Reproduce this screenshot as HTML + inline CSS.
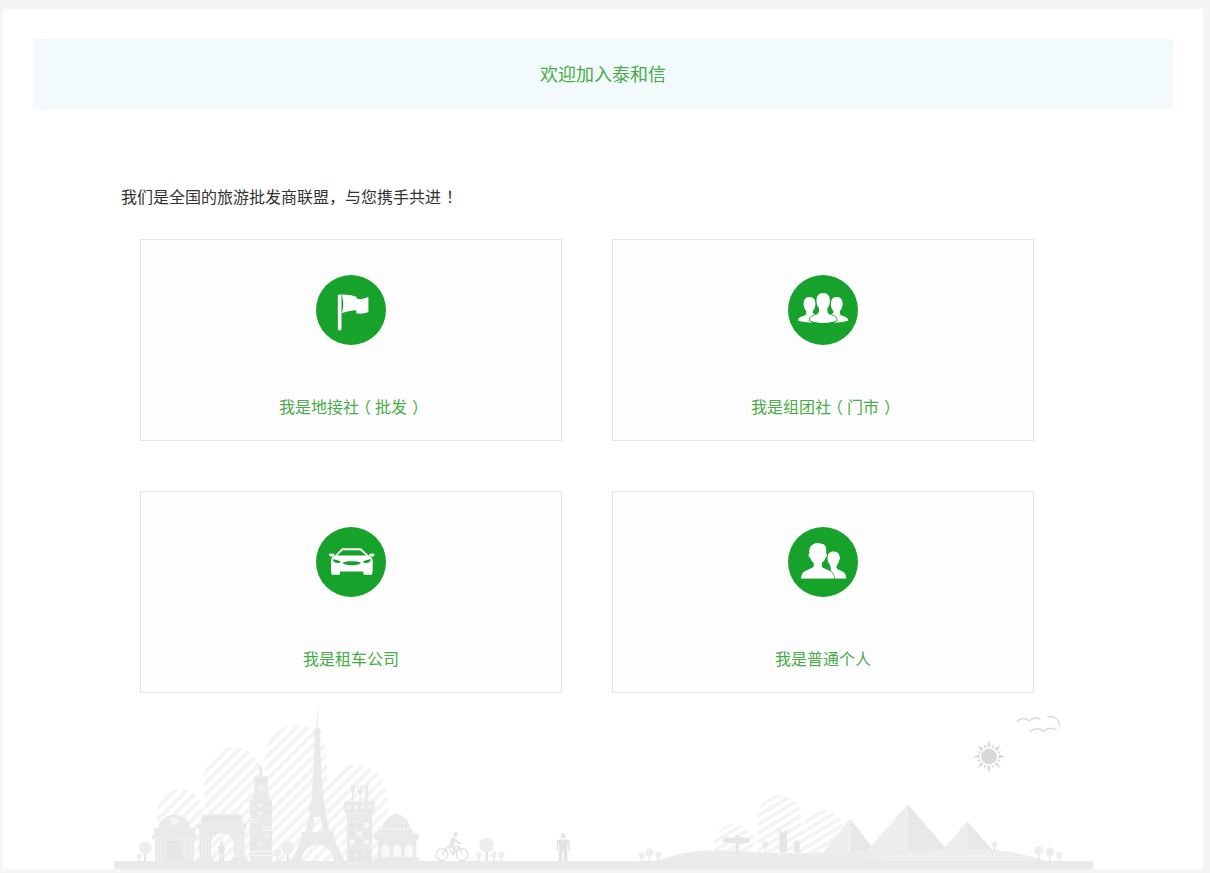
<!DOCTYPE html>
<html lang="zh-CN">
<head>
<meta charset="utf-8">
<title>欢迎加入泰和信</title>
<style>
*{box-sizing:border-box;margin:0;padding:0}
i{font-style:normal}
html,body{width:1210px;height:873px;overflow:hidden;background:#f5f5f5}
body{font-family:"Liberation Sans","Noto Sans CJK SC",sans-serif;position:relative;color:#333}
.panel{position:absolute;left:3px;top:9px;width:1200px;height:860px;background:#fff;overflow:hidden}
.banner{position:absolute;left:30px;top:30px;width:1140px;height:70px;background:#f2fafc;text-align:center;line-height:70px;font-size:18px;color:#4aab4a}
.banner span{position:relative;top:1px;font-weight:400}
.slogan{position:absolute;left:118px;top:177px;height:24px;line-height:24px;font-size:16px;color:#333;white-space:nowrap}
.card{position:absolute;width:422px;height:202px;border:1px solid #e5e5e5;background:#fdfdfd;text-decoration:none;display:block}
.card .ico{position:absolute;left:175px;top:35px;width:70px;height:70px;border-radius:50%;background:#16a22b}
.card .ico svg{position:absolute;left:0;top:0;width:70px;height:70px}
.card .txt{position:absolute;left:0;right:0;top:156px;height:24px;line-height:24px;text-align:center;font-size:16px;color:#4aab4a;white-space:nowrap}
.pl{position:relative;left:-4px}.pr{position:relative;left:5px}
.c1{left:137px;top:230px}
.c2{left:609px;top:230px}
.c3{left:137px;top:482px}
.c4{left:609px;top:482px}
.city{position:absolute;left:0;top:0;width:1200px;height:860px;pointer-events:none}
</style>
</head>
<body>
<div class="panel">
  <svg class="city" viewBox="3 9 1200 860">
    <!--CITY-->
<defs>
<pattern id="st1" width="8.2" height="8.2" patternUnits="userSpaceOnUse" patternTransform="rotate(45)"><rect x="0" y="0" width="4.2" height="8.2" fill="#f4f4f4"/></pattern>
<pattern id="st2" width="7.4" height="7.4" patternUnits="userSpaceOnUse" patternTransform="rotate(59)"><rect x="0" y="0" width="3.7" height="7.4" fill="#f4f4f4"/></pattern>
</defs>
<path d="M157 812 A23 23 0 0 1 203 812 V861 H157 Z" fill="url(#st1)"/>
<path d="M204 776 A29 29 0 0 1 262 776 V861 H204 Z" fill="url(#st1)"/>
<path d="M265 756 A31 31 0 0 1 327 756 V861 H265 Z" fill="url(#st1)"/>
<path d="M324.5 796 A31.5 31.5 0 0 1 387.5 796 V861 H324.5 Z" fill="url(#st1)"/>
<circle cx="734.5" cy="844.5" r="20.5" fill="url(#st2)"/>
<circle cx="779.5" cy="817" r="22" fill="url(#st2)"/>
<circle cx="823" cy="831" r="21" fill="url(#st2)"/>
<path d="M757.5 817 L757.5 861 L844 861 L844 831 L801.5 831 L801.5 817 Z" fill="url(#st2)"/>
<path d="M822.6 853 L850.2 818.7 L850.2 856 Z" fill="#eeeeee"/>
<path d="M850.2 818.7 L876 852 L850.2 856 Z" fill="#e8e8e8"/>
<path d="M866 852 L907.6 804.2 L907.6 858 Z" fill="#eeeeee"/>
<path d="M907.6 804.2 L946 848.5 L907.6 858 Z" fill="#e8e8e8"/>
<path d="M944 848.5 L967.1 821.3 L967.1 856 Z" fill="#eeeeee"/>
<path d="M967.1 821.3 L992.5 850 L967.1 856 Z" fill="#e8e8e8"/>
<path d="M655 861.5 C672 855 690 850.5 712 850.5 C740 850.5 760 853 790 853 C830 853 850 851 880 851 C930 851 960 846.5 992 849.5 C1015 852 1035 857 1047 861.5 Z" fill="#ececec"/>
<path d="M860 861.5 C900 852 960 848 1000 851 C1020 853 1038 858 1047 861.5 Z" fill="#eeeeee"/>
<rect x="114" y="861" width="979" height="8" fill="#eaeaea"/>
<rect x="144.5" y="848.0" width="1.6" height="13.0" fill="#dddddd"/>
<circle cx="145.3" cy="848" r="6.2" fill="#eeeeee"/>
<rect x="138.8" y="856.0" width="1.0" height="5.0" fill="#dddddd"/>
<circle cx="139.3" cy="856" r="2.6" fill="#eeeeee"/>
<rect x="287.0" y="847.7" width="1.6" height="13.3" fill="#dddddd"/>
<circle cx="287.8" cy="847.7" r="6.5" fill="#eeeeee"/>
<rect x="276.8" y="852.7" width="1.0" height="8.3" fill="#dddddd"/>
<circle cx="277.3" cy="852.7" r="3.8" fill="#eeeeee"/>
<rect x="485.7" y="845.0" width="1.9" height="16.0" fill="#dddddd"/>
<circle cx="486.6" cy="845" r="7.4" fill="#eeeeee"/>
<rect x="478.2" y="854.5" width="1.0" height="6.5" fill="#dddddd"/>
<circle cx="478.7" cy="854.5" r="3" fill="#eeeeee"/>
<rect x="493.3" y="854.5" width="1.0" height="6.5" fill="#dddddd"/>
<circle cx="493.8" cy="854.5" r="3" fill="#eeeeee"/>
<rect x="501.0" y="854.5" width="1.0" height="6.5" fill="#dddddd"/>
<circle cx="501.5" cy="854.5" r="3" fill="#eeeeee"/>
<rect x="641.1" y="855.4" width="1.0" height="5.6" fill="#dddddd"/>
<circle cx="641.6" cy="855.4" r="3" fill="#eeeeee"/>
<rect x="648.8" y="852.4" width="1.0" height="8.6" fill="#dddddd"/>
<circle cx="649.3" cy="852.4" r="4" fill="#eeeeee"/>
<rect x="657.7" y="854.4" width="1.0" height="6.6" fill="#dddddd"/>
<circle cx="658.2" cy="854.4" r="3" fill="#eeeeee"/>
<rect x="1038.3" y="850.4" width="1.1" height="10.6" fill="#dddddd"/>
<circle cx="1038.9" cy="850.4" r="4.5" fill="#eeeeee"/>
<rect x="1049.2" y="851.8" width="1.1" height="9.2" fill="#dddddd"/>
<circle cx="1049.8" cy="851.8" r="4.5" fill="#eeeeee"/>
<rect x="1058.8" y="854.8" width="1.0" height="6.2" fill="#dddddd"/>
<circle cx="1059.3" cy="854.8" r="3.2" fill="#eeeeee"/>
<rect x="764.5" y="844.5" width="1" height="6.5" fill="#e2e2e2"/>
<circle cx="765" cy="844.5" r="3.4" fill="#ececec"/>
<rect x="994.0" y="844.5" width="1" height="6.5" fill="#e2e2e2"/>
<circle cx="994.5" cy="844.5" r="3" fill="#ececec"/>
<g fill="#eaeaea">
<path d="M158.5 828 A15.9 13.2 0 0 1 190.3 828 Z"/>
<rect x="154" y="827.8" width="41.2" height="7"/>
<rect x="152.2" y="834.7" width="44.6" height="5"/>
<rect x="155.2" y="839.5" width="39" height="21.7"/>
</g>
<circle cx="174.4" cy="821.3" r="3.9" fill="#f4f4f4"/>
<rect x="167.5" y="841" width="14.8" height="20" fill="#e6e6e6"/>
<rect x="157" y="840" width="1.2" height="21" fill="#f1f1f1"/>
<rect x="160" y="840" width="1.2" height="21" fill="#f1f1f1"/>
<rect x="163" y="840" width="1.2" height="21" fill="#f1f1f1"/>
<rect x="185" y="840" width="1.2" height="21" fill="#f1f1f1"/>
<rect x="188" y="840" width="1.2" height="21" fill="#f1f1f1"/>
<rect x="191" y="840" width="1.2" height="21" fill="#f1f1f1"/>
<rect x="154" y="833.6" width="41.2" height="1.1" fill="#e6e6e6"/>
<g fill="#eaeaea">
<rect x="201.5" y="814.5" width="41" height="10"/>
<rect x="197.2" y="823.8" width="49.5" height="4.8"/>
<path d="M199.2 828.4 H244.7 V861 H233.8 V844.5 A11.4 11.4 0 0 0 211 844.5 V861 H199.2 Z"/>
<rect x="197.2" y="857.6" width="15.8" height="3.6"/><rect x="231.8" y="857.6" width="14.9" height="3.6"/>
</g>
<rect x="204" y="816.5" width="36" height="4.5" fill="#e6e6e6"/>
<rect x="202" y="836" width="1.2" height="21" fill="#f1f1f1"/>
<rect x="205" y="836" width="1.2" height="21" fill="#f1f1f1"/>
<rect x="208" y="836" width="1.2" height="21" fill="#f1f1f1"/>
<rect x="236.5" y="836" width="1.2" height="21" fill="#f1f1f1"/>
<rect x="239.5" y="836" width="1.2" height="21" fill="#f1f1f1"/>
<rect x="242.5" y="836" width="1.2" height="21" fill="#f1f1f1"/>
<g fill="#e4e4e4"><circle cx="221.6" cy="843" r="1.7"/><path d="M218.4 846 Q218.4 845.2 219.4 845.2 H223.8 Q224.8 845.2 224.8 846 V852 H223.8 V861 H222 V853 H221.2 V861 H219.4 V852 H218.4 Z"/></g>
<g fill="#eaeaea">
<rect x="259" y="766.4" width="3.4" height="10.5"/>
<rect x="254.2" y="776.3" width="13.8" height="18"/>
<rect x="252.3" y="794" width="17.2" height="6.5"/>
<rect x="249.7" y="800" width="22.4" height="61.2"/>
</g>
<rect x="258.6" y="786" width="4.6" height="4.6" fill="#f1f1f1"/>
<rect x="257" y="779" width="8" height="3.4" fill="#e6e6e6"/>
<rect x="252.5" y="803" width="4" height="4.6" fill="#e6e6e6"/>
<rect x="258.5" y="803" width="4" height="4.6" fill="#f1f1f1"/>
<rect x="265" y="803" width="4" height="4.6" fill="#e6e6e6"/>
<rect x="252.5" y="811" width="4" height="4.6" fill="#e6e6e6"/>
<rect x="258.5" y="811" width="4" height="4.6" fill="#f1f1f1"/>
<rect x="265" y="811" width="4" height="4.6" fill="#e6e6e6"/>
<rect x="252.5" y="836" width="4" height="4.6" fill="#e6e6e6"/>
<rect x="258.5" y="834" width="4" height="4.6" fill="#e6e6e6"/>
<rect x="265" y="834" width="4" height="4.6" fill="#f1f1f1"/>
<rect x="252.5" y="842" width="4" height="4.6" fill="#e6e6e6"/>
<rect x="258.5" y="842" width="4" height="4.6" fill="#f1f1f1"/>
<rect x="265" y="842" width="4" height="4.6" fill="#e6e6e6"/>
<rect x="249.7" y="818.5" width="9" height="1.3" fill="#f6f6f6"/>
<rect x="249.7" y="821.5" width="9" height="1.3" fill="#f6f6f6"/>
<rect x="262" y="826.5" width="10.1" height="1.3" fill="#f6f6f6"/>
<rect x="262" y="829.5" width="10.1" height="1.3" fill="#f6f6f6"/>
<rect x="249.7" y="851" width="22.4" height="1.3" fill="#f6f6f6"/>
<rect x="249.7" y="855" width="22.4" height="1.3" fill="#f6f6f6"/>
<g fill="#eaeaea">
<path d="M317 708.9 L317.6 708.9 L318 727 L316.6 727 Z"/>
<rect x="316.2" y="722.5" width="2.2" height="1.2"/>
<path d="M314.2 734.7 V730.5 Q314.2 727.6 317.3 727.6 Q320.6 727.6 320.6 730.5 V734.7 Z"/>
<path d="M314.6 734.7 H320.1 C320.8 765 322.5 790 324.5 807 H310.6 C312.5 790 314 765 314.6 734.7 Z"/>
<rect x="308.7" y="807" width="17.4" height="4.2"/>
<path d="M310.4 811 H324.8 L329.6 832 H323.2 L320.6 817 H314.6 L312.1 832 H305.2 Z"/>
<rect x="301.3" y="831.8" width="32.5" height="5.2"/>
<path d="M302.6 836.8 H332.6 L345 861.2 H333.8 A16.1 16.5 0 0 0 301.6 861.2 H291.8 Z"/>
</g>
<g fill="#eaeaea">
<rect x="344.3" y="801.1" width="30.2" height="11.6"/>
<rect x="346.9" y="812.5" width="25.2" height="48.7"/>
<ellipse cx="352.7" cy="788.8" rx="2.4" ry="4"/><rect x="352" y="790" width="1.5" height="11.5"/>
<path d="M357.3 784.9 h1.1 v5 h1.3 v-5 h1.1 v5 h1.3 v-5 h1.1 v7 q0 1.6 -2.2 1.8 v8 h-1.6 v-8 q-2.1 -0.2 -2.1 -1.8 Z"/>
<path d="M365 801.5 V786.5 Q365 784.9 366.8 784.9 H368.4 V801.5 Z"/>
</g>
<polygon points="348.90,804.50 349.57,806.28 351.47,806.37 349.98,807.55 350.49,809.38 348.90,808.33 347.31,809.38 347.82,807.55 346.33,806.37 348.23,806.28" fill="#f8f8f8"/>
<polygon points="355.80,804.50 356.47,806.28 358.37,806.37 356.88,807.55 357.39,809.38 355.80,808.33 354.21,809.38 354.72,807.55 353.23,806.37 355.13,806.28" fill="#f8f8f8"/>
<polygon points="362.80,804.50 363.47,806.28 365.37,806.37 363.88,807.55 364.39,809.38 362.80,808.33 361.21,809.38 361.72,807.55 360.23,806.37 362.13,806.28" fill="#f8f8f8"/>
<polygon points="369.70,804.50 370.37,806.28 372.27,806.37 370.78,807.55 371.29,809.38 369.70,808.33 368.11,809.38 368.62,807.55 367.13,806.37 369.03,806.28" fill="#f8f8f8"/>
<rect x="349.8" y="823" width="4.4" height="4.4" fill="#e6e6e6"/>
<rect x="364.3" y="823" width="4.4" height="4.4" fill="#f8f8f8"/>
<rect x="357" y="831.6" width="4.4" height="4.4" fill="#f8f8f8"/>
<rect x="349.8" y="840" width="4.4" height="4.4" fill="#f8f8f8"/>
<rect x="364.3" y="840" width="4.4" height="4.4" fill="#f8f8f8"/>
<rect x="357" y="823" width="4.4" height="4.4" fill="#e6e6e6"/>
<rect x="364.3" y="831.6" width="4.4" height="4.4" fill="#e6e6e6"/>
<rect x="349.8" y="831.6" width="4.4" height="4.4" fill="#e6e6e6"/>
<rect x="357" y="840" width="4.4" height="4.4" fill="#e6e6e6"/>
<rect x="349" y="850" width="5.5" height="11" fill="#e6e6e6"/><rect x="356.8" y="850" width="5.5" height="11" fill="#e6e6e6"/><rect x="364.5" y="850" width="5.5" height="11" fill="#e6e6e6"/>
<g fill="#eaeaea">
<path d="M383 829 C383 820 389 816.5 396.4 813.6 C403.5 816.5 409.8 820 409.8 829 Z"/>
<rect x="379.6" y="828.5" width="33.5" height="5"/>
<rect x="374.7" y="833.2" width="44" height="6.8"/>
<rect x="378" y="839.8" width="38.3" height="18"/>
<rect x="374.7" y="857.4" width="44" height="3.8"/>
</g>
<rect x="381.0" y="828.2" width="1.6" height="1.6" fill="#fff"/>
<rect x="384.7" y="828.2" width="1.6" height="1.6" fill="#fff"/>
<rect x="388.4" y="828.2" width="1.6" height="1.6" fill="#fff"/>
<rect x="392.1" y="828.2" width="1.6" height="1.6" fill="#fff"/>
<rect x="395.8" y="828.2" width="1.6" height="1.6" fill="#fff"/>
<rect x="399.5" y="828.2" width="1.6" height="1.6" fill="#fff"/>
<rect x="403.2" y="828.2" width="1.6" height="1.6" fill="#fff"/>
<rect x="406.9" y="828.2" width="1.6" height="1.6" fill="#fff"/>
<rect x="410.6" y="828.2" width="1.6" height="1.6" fill="#fff"/>
<path d="M381.4 857 V848.7 A4 4 0 0 1 389.4 848.7 V857 Z" fill="#f8f8f8"/>
<path d="M393.1 857 V848.7 A4 4 0 0 1 401.1 848.7 V857 Z" fill="#f8f8f8"/>
<path d="M404.8 857 V848.7 A4 4 0 0 1 412.8 848.7 V857 Z" fill="#f8f8f8"/>
<g fill="none" stroke="#e2e2e2" stroke-width="1.3"><circle cx="442" cy="854.6" r="5.9"/><circle cx="462.2" cy="854.6" r="5.9"/>
<path d="M442 854.6 L448 846.5 H459 L462.2 854.6 M448 846.5 L453 854.6 L459 846.5 M457.5 843.5 H461"/></g>
<g fill="#e6e6e6"><circle cx="455.7" cy="834.4" r="2.3"/><path d="M451.3 838 Q452.5 836.6 454.5 837.4 L458.5 841.6 L461.5 842.4 L461 844 L457.4 843.4 L455 841.6 L453.8 845.6 L456 849 L453.5 856 L451.8 855.4 L453 849.6 L449.8 846.6 Q448.8 845.4 449.4 843.6 Z"/></g>
<g fill="#e3e3e3"><circle cx="563" cy="835.8" r="2.5"/><path d="M556.6 842.4 Q556.6 839.4 559.6 839.4 H566.4 Q569.6 839.4 569.6 842.4 V850.5 Q569.6 851.4 568.9 851.4 Q568.2 851.4 568.2 850.5 V843.4 H567.4 V861 H563.8 V851 H562.4 V861 H558.8 V843.4 H558 V850.5 Q558 851.4 557.3 851.4 Q556.6 851.4 556.6 850.5 Z"/></g>
<g fill="#e6e6e6"><rect x="735.6" y="835" width="3.4" height="20"/><path d="M722.5 840.2 L725.5 837.5 H748 Q750 837.5 750 840.3 Q750 843 748 843 H725.5 Z"/>
<path d="M779.4 852 V829.6 H781.4 V832.4 H784.8 V829.6 H786.8 V852 Z"/><rect x="793.7" y="840.5" width="6" height="12" rx="1.5"/></g>
<circle cx="989" cy="756.5" r="7.9" fill="#d8d8d8"/>
<polygon points="987.09,747.09 990.91,747.09 989.00,740.10" fill="#dadada"/>
<polygon points="991.49,747.23 993.79,748.18 994.13,744.12" fill="#dadada"/>
<polygon points="994.30,748.50 997.00,751.20 1000.60,744.90" fill="#dadada"/>
<polygon points="997.32,751.71 998.27,754.01 1001.38,751.37" fill="#dadada"/>
<polygon points="998.41,754.59 998.41,758.41 1005.40,756.50" fill="#dadada"/>
<polygon points="998.27,758.99 997.32,761.29 1001.38,761.63" fill="#dadada"/>
<polygon points="997.00,761.80 994.30,764.50 1000.60,768.10" fill="#dadada"/>
<polygon points="993.79,764.82 991.49,765.77 994.13,768.88" fill="#dadada"/>
<polygon points="990.91,765.91 987.09,765.91 989.00,772.90" fill="#dadada"/>
<polygon points="986.51,765.77 984.21,764.82 983.87,768.88" fill="#dadada"/>
<polygon points="983.70,764.50 981.00,761.80 977.40,768.10" fill="#dadada"/>
<polygon points="980.68,761.29 979.73,758.99 976.62,761.63" fill="#dadada"/>
<polygon points="979.59,758.41 979.59,754.59 972.60,756.50" fill="#dadada"/>
<polygon points="979.73,754.01 980.68,751.71 976.62,751.37" fill="#dadada"/>
<polygon points="981.00,751.20 983.70,748.50 977.40,744.90" fill="#dadada"/>
<polygon points="984.21,748.18 986.51,747.23 983.87,744.12" fill="#dadada"/>
<g fill="none" stroke="#dadada" stroke-width="1.4" stroke-linecap="round">
<path d="M1017.2 721.3 C1020.5 717.8 1025.5 717.6 1029.3 720.8 C1032.5 717.6 1036.5 717.4 1039.8 719.2"/>
<path d="M1030.2 731.6 C1034 727.8 1039.5 727.8 1043.6 731.4 C1047.5 727.8 1052.5 727.8 1056.2 729.8"/>
<path d="M1048 716.6 C1054 716 1059.5 719.5 1059.6 725"/>
</g>
<!--/CITY-->
  </svg>
  <div class="banner"><span>欢迎加入泰和信</span></div>
  <div class="slogan">我们是全国的旅游批发商联盟，与您携手共进<i class="pr">！</i></div>
  <a class="card c1"><span class="ico"><svg viewBox="0 0 70 70"><path fill="#fff" d="M21.8 19.7 L25.5 19.4 L25.5 54.6 L23.6 55.8 L21.9 54.6 Z"/>
<path fill="#fff" d="M25.5 19.4 C31 19.4 36 20.3 40.3 21.7 L40.8 23.4 C44 24.6 48 23.6 52.4 21.9 L52.4 37.1 C48 38.6 44 39 40.3 38.3 L40.3 35.2 C36 35.4 31 36.4 25.9 38 C27.8 32 27.8 25 25.5 19.4 Z"/></svg></span><span class="txt">我是地接社<i class="pl">（</i>批发<i class="pr">）</i></span></a>
  <a class="card c2"><span class="ico"><svg viewBox="0 0 70 70"><g fill="#fff">
<path d="M21.5 21.9 C25.6 21.9 27.4 24.6 27.4 29 C27.4 32.5 25.3 37.4 21.5 37.4 C17.7 37.4 15.6 32.5 15.6 29 C15.6 24.6 17.4 21.9 21.5 21.9 Z"/>
<path d="M18.3 35 L18.3 38.2 C18.3 39.8 16.5 40.6 14.5 41.3 C11.5 42.3 10 43.3 10 45.6 C14 47 19 47.6 24 47.6 L30 40 L24.7 38.2 L24.7 35 Z"/>
<path d="M48.7 21.9 C52.8 21.9 54.6 24.6 54.6 29 C54.6 32.5 52.5 37.4 48.7 37.4 C44.9 37.4 42.8 32.5 42.8 29 C42.8 24.6 44.6 21.9 48.7 21.9 Z"/>
<path d="M51.9 35 L51.9 38.2 C51.9 39.8 53.7 40.6 55.7 41.3 C58.7 42.3 60.2 43.3 60.2 45.6 C56.2 47 51.2 47.6 46.2 47.6 L40.2 40 L45.5 38.2 L45.5 35 Z"/>
</g>
<g fill="#16a22b" stroke="#16a22b" stroke-width="1.6"><path d="M31 33 L31 36.2 C31 38.2 29 39.6 26 40.6 C23 41.6 21.7 43 21.7 45.6 C25 47.2 30 47.9 35.2 47.9 C40.4 47.9 45.4 47.2 48.7 45.6 C48.7 43 47.4 41.6 44.4 40.6 C41.4 39.6 39.4 38.2 39.4 36.2 L39.4 33 Z"/><path d="M35.2 17.9 C39.9 17.9 41.9 21 41.9 26 C41.9 30 39.5 35.6 35.2 35.6 C30.9 35.6 28.5 30 28.5 26 C28.5 21 30.5 17.9 35.2 17.9 Z"/></g>
<g fill="#fff"><path d="M31 33 L31 36.2 C31 38.2 29 39.6 26 40.6 C23 41.6 21.7 43 21.7 45.6 C25 47.2 30 47.9 35.2 47.9 C40.4 47.9 45.4 47.2 48.7 45.6 C48.7 43 47.4 41.6 44.4 40.6 C41.4 39.6 39.4 38.2 39.4 36.2 L39.4 33 Z"/><path d="M35.2 17.9 C39.9 17.9 41.9 21 41.9 26 C41.9 30 39.5 35.6 35.2 35.6 C30.9 35.6 28.5 30 28.5 26 C28.5 21 30.5 17.9 35.2 17.9 Z"/></g></svg></span><span class="txt">我是组团社<i class="pl">（</i>门市<i class="pr">）</i></span></a>
  <a class="card c3"><span class="ico"><svg viewBox="0 0 70 70"><g fill="#fff">
<path d="M26 21.3 L45 21.3 L52.6 28.6 L55.5 30.5 Q56.7 32 56.7 34 L56.7 44.6 L15 44.6 L15 34 Q15 32 16.2 30.5 L19 28.6 Z"/>
<rect x="15.4" y="43" width="8.6" height="4.8" rx="0.8"/>
<rect x="47.4" y="43" width="8.9" height="4.8" rx="0.8"/>
<path d="M13.2 27.4 Q13.2 26.6 14.2 26.6 L17.4 26.8 Q18.6 27 18.4 28.4 L17.8 29.8 L14.6 29.6 Q13.2 29.2 13.2 27.4 Z"/>
<path d="M58.4 27.4 Q58.4 26.6 57.4 26.6 L54.2 26.8 Q53 27 53.2 28.4 L53.8 29.8 L57 29.6 Q58.4 29.2 58.4 27.4 Z"/>
</g>
<g fill="#16a22b">
<path d="M26.9 23.3 L44.1 23.3 L50.2 28.6 L21 28.6 Z"/>
<path d="M16.6 32.3 C19.5 32.6 22.5 33.4 24.6 34.6 C24.2 35.8 23 36.2 21.5 36.1 C19 35.9 17 34.8 16.6 32.3 Z"/>
<path d="M55 32.3 C52.1 32.6 49.1 33.4 47 34.6 C47.4 35.8 48.6 36.2 50.1 36.1 C52.6 35.9 54.6 34.8 55 32.3 Z"/>
<path d="M26.8 35.6 C29 34.6 32 34.3 35.8 34.3 C39.6 34.3 42 34.6 44.8 35.6 C44.4 37.4 41 38.3 35.8 38.3 C30.6 38.3 27.2 37.4 26.8 35.6 Z"/>
</g></svg></span><span class="txt">我是租车公司</span></a>
  <a class="card c4"><span class="ico"><svg viewBox="0 0 70 70"><g fill="#fff">
<path d="M42.4 38.4 C40.4 36.5 39.3 33.5 39.5 30 C39.7 26.5 42 24.4 45.5 24.4 C49.2 24.4 51.6 26.5 51.6 30 C52.2 30.4 52.2 32.4 51.3 33 C50.9 35.4 49.9 37.2 48.6 38.4 L48.6 40 C48.4 41.8 50 42.6 52.4 43.6 C56 45 58.3 46.6 58.3 51.7 L44 51.7 Z"/>
</g>
<g fill="#fff" stroke="#16a22b" stroke-width="1.5" paint-order="stroke">
<path d="M25.7 38.8 L25.7 35.8 C23.6 34.2 22.6 32.2 22.2 30.4 C20.6 30.4 19.8 27.6 21.4 26.6 C21 22 22 18.4 25.6 17 C28 15.6 31 15.8 33 16.8 C36.4 16.6 38.4 19.6 38.2 23 L38.2 26.4 C39.4 27.2 39 30.2 37.6 30.4 C37 32.6 35.8 34.4 33.8 35.8 L33.8 38.8 C33.8 40.4 35.4 41.2 37.6 41.9 C42.8 43.6 46 46 46.2 51.7 L13.1 51.7 C13.1 46 16 44 20.4 42.4 C23.4 41.4 25.7 40.6 25.7 38.8 Z"/>
</g>
<rect x="12" y="51.75" width="48" height="2" fill="#16a22b"/></svg></span><span class="txt">我是普通个人</span></a>
</div>
</body>
</html>
